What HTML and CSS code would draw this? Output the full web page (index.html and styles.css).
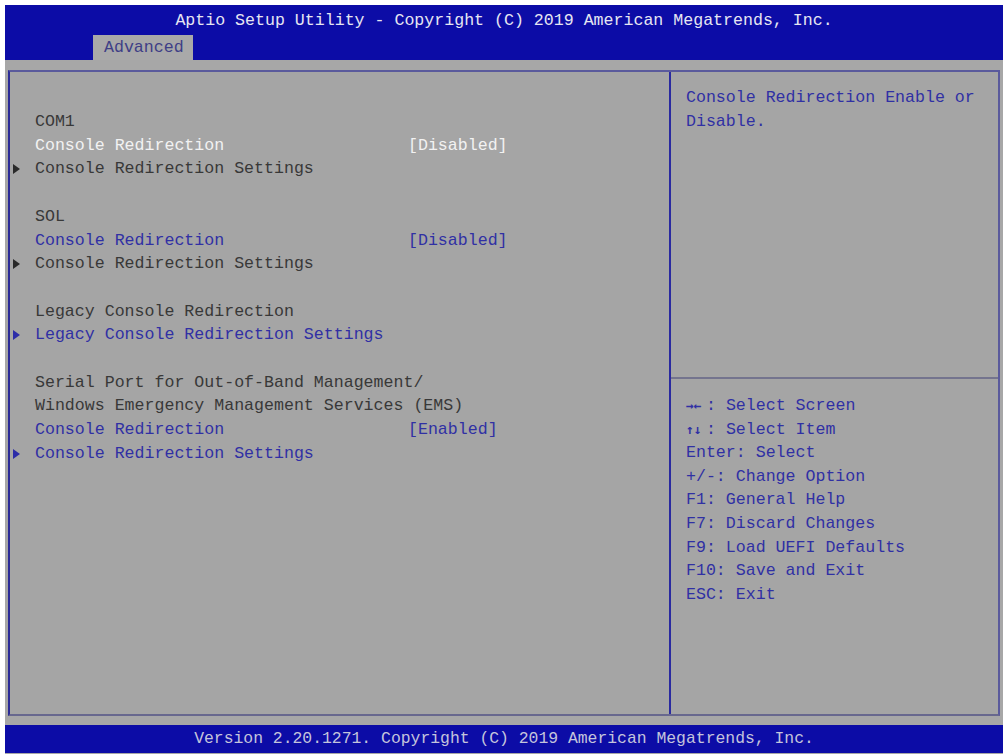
FILE: index.html
```html
<!DOCTYPE html>
<html lang="en">
<head>
    <meta charset="UTF-8">
    <meta name="viewport" content="width=device-width, initial-scale=1.0">
    <title>Aptio Setup Utility</title>
    <link rel="stylesheet" href="styles.css">
</head>
<body>
    <div class="screen">
        <div class="topbar">
            <div class="title">Aptio Setup Utility - Copyright (C) 2019 American Megatrends, Inc.</div>
            <div class="tabs"><span class="tab">Advanced</span></div>
        </div>

        <div class="frame">
            <div class="main">
                <div class="group">
                    <div class="row"><span class="mark"></span><span class="label">COM1</span></div>
                    <div class="row selected"><span class="mark"></span><span class="label">Console Redirection</span><span class="value">[Disabled]</span></div>
                    <div class="row"><span class="mark arrow"></span><span class="label">Console Redirection Settings</span></div>
                </div>
                <div class="group">
                    <div class="row"><span class="mark"></span><span class="label">SOL</span></div>
                    <div class="row option"><span class="mark"></span><span class="label">Console Redirection</span><span class="value">[Disabled]</span></div>
                    <div class="row"><span class="mark arrow"></span><span class="label">Console Redirection Settings</span></div>
                </div>
                <div class="group">
                    <div class="row"><span class="mark"></span><span class="label">Legacy Console Redirection</span></div>
                    <div class="row option"><span class="mark arrow"></span><span class="label">Legacy Console Redirection Settings</span></div>
                </div>
                <div class="group">
                    <div class="row"><span class="mark"></span><span class="label">Serial Port for Out-of-Band Management/</span></div>
                    <div class="row"><span class="mark"></span><span class="label">Windows Emergency Management Services (EMS)</span></div>
                    <div class="row option"><span class="mark"></span><span class="label">Console Redirection</span><span class="value">[Enabled]</span></div>
                    <div class="row option"><span class="mark arrow"></span><span class="label">Console Redirection Settings</span></div>
                </div>
            </div>

            <div class="side">
                <div class="help">Console Redirection Enable or Disable.</div>
                <div class="keys">
                    <div><span class="sym">&rarr;&larr;</span>: Select Screen</div>
                    <div><span class="sym">&uarr;&darr;</span>: Select Item</div>
                    <div>Enter: Select</div>
                    <div>+/-: Change Option</div>
                    <div>F1: General Help</div>
                    <div>F7: Discard Changes</div>
                    <div>F9: Load UEFI Defaults</div>
                    <div>F10: Save and Exit</div>
                    <div>ESC: Exit</div>
                </div>
            </div>
        </div>

        <div class="footer">Version 2.20.1271. Copyright (C) 2019 American Megatrends, Inc.</div>
    </div>
</body>
</html>
```

FILE: styles.css
```css
body, html {
    margin: 0;
    padding: 0;
    background: #fff;
    font-family: 'Liberation Mono', 'DejaVu Sans Mono', monospace;
    font-size: 16.6px;
    overflow: hidden;
}

.screen {
    margin: 5px 0 0 5px;
    width: 998px;
    height: 749px;
    background: #a7a7a7;
    display: flex;
    flex-direction: column;
}

.topbar {
    height: 55px;
    background: #0c0ca6;
    box-sizing: border-box;
    padding-top: 4px;
}

.title {
    text-align: center;
    line-height: 23px;
    color: #e6e6f2;
}

.tabs {
    margin-top: 3px;
    padding-left: 88px;
    display: flex;
}

.tab {
    width: 100px;
    height: 25px;
    line-height: 25px;
    box-sizing: border-box;
    padding-left: 11px;
    background: #a9a9a9;
    color: #3e3e86;
}

.frame {
    margin: 10px 3px 0 3px;
    height: 646px;
    box-sizing: border-box;
    border: 2px solid #5a5a9c;
    border-left-color: #2b2b96;
    border-bottom-color: #68688e;
    display: flex;
    background: #a5a5a5;
}

.main {
    width: 659px;
    padding-top: 38px;
    line-height: 23.7px;
    color: #383838;
}

.group + .group {
    margin-top: 23.7px;
}

.row {
    display: grid;
    grid-template-columns: 25px 373px auto;
    align-items: center;
}

.label {
    white-space: nowrap;
}

.row.selected { color: #f2f2f2; }
.row.option { color: #3030a4; }

.mark.arrow {
    justify-self: start;
    margin-left: 3px;
    width: 0;
    height: 0;
    border-left: 7px solid currentColor;
    border-top: 5px solid transparent;
    border-bottom: 5px solid transparent;
}

.row .mark.arrow { color: #2a2a2a; }
.row.option .mark.arrow { color: #2c2ca8; }

.side {
    flex: 1;
    border-left: 2px solid #2a2aa0;
    display: flex;
    flex-direction: column;
    line-height: 23.6px;
    color: #3030a4;
}

.help {
    height: 307px;
    box-sizing: border-box;
    padding: 14px 15px 0 15px;
    width: 100%;
    border-bottom: 2px solid #74748e;
}

.keys {
    padding: 15px 15px 0 15px;
}

.sym {
    display: inline-block;
    width: 20px;
    font-family: 'DejaVu Sans Mono', monospace;
    font-weight: bold;
    font-size: 13px;
}

.footer {
    margin-top: 9px;
    height: 28px;
    line-height: 28px;
    background: #0c0ca6;
    color: #c4c4dc;
    text-align: center;
    font-size: 16.4px;
}
```
